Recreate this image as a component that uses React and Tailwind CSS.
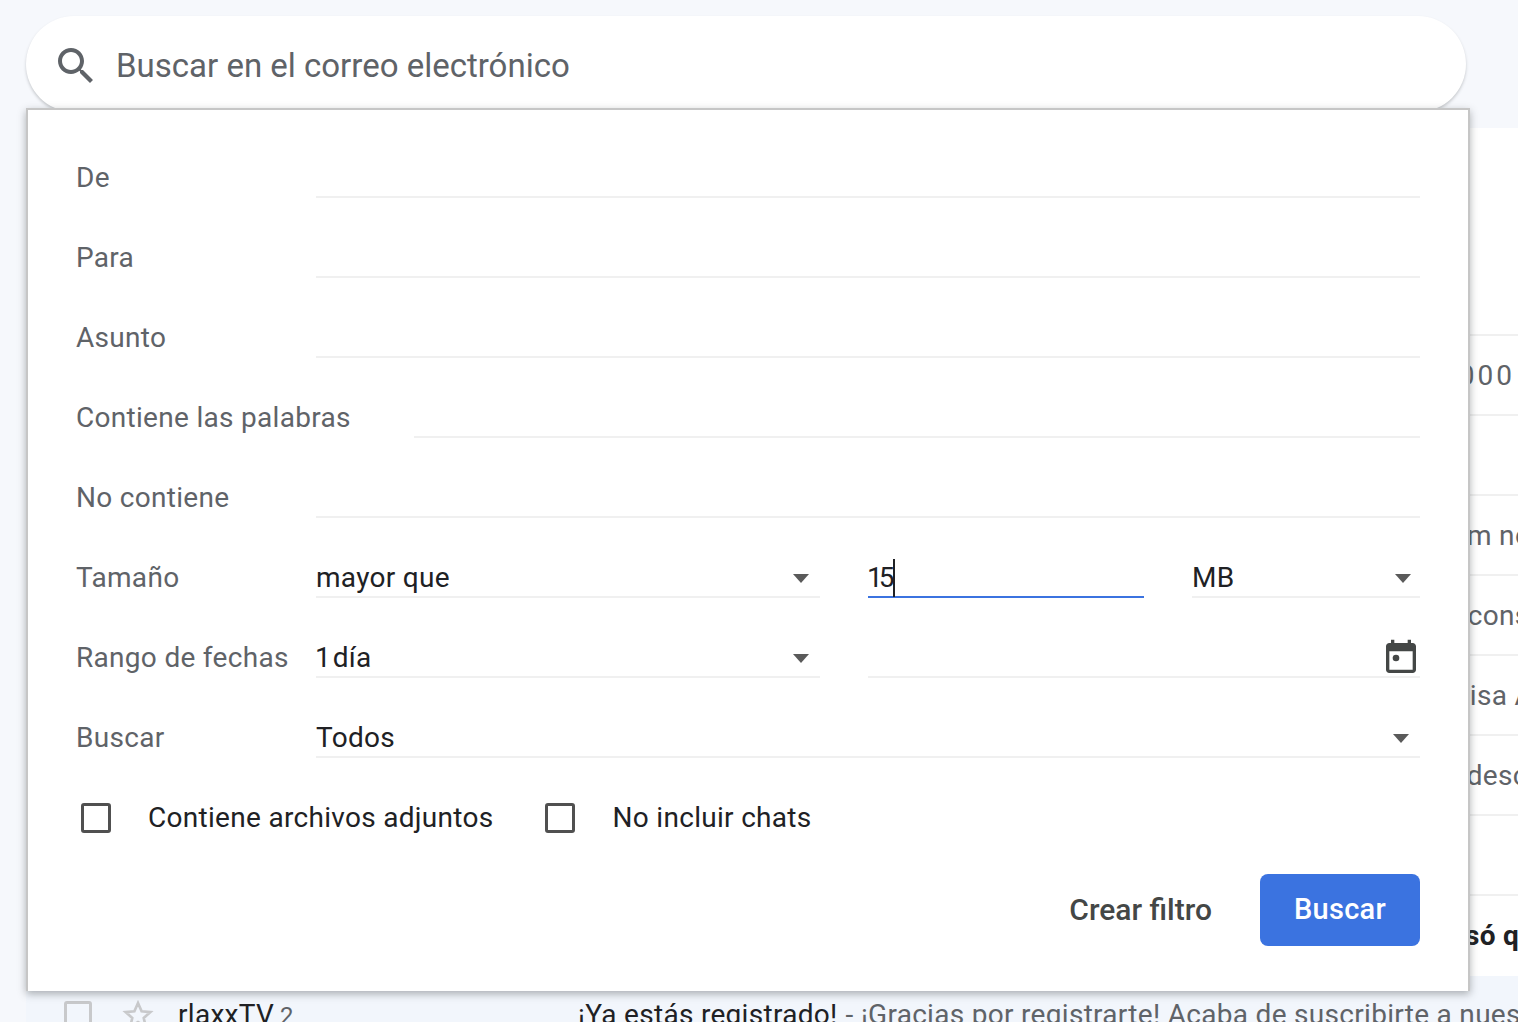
import { Fragment } from "react";

const font = "font-['Roboto','Liberation_Sans',sans-serif]";

// rows of the mail list that stick out to the right of the panel
const mailRows = [
  { text: "5000", cls: "pl-[1414px] tracking-[3px] text-[#5f6368]" },
  { text: "", cls: "" },
  { text: "bm no", cls: "pl-[1425px] text-[#5f6368]" },
  { text: "a cons", cls: "pl-[1419px] text-[#5f6368]" },
  { text: "misa A", cls: "pl-[1419px] text-[#5f6368]" },
  { text: "a desc", cls: "pl-[1418px] text-[#5f6368]" },
  { text: "", cls: "" },
  { text: "só q", cls: "pl-[1439px] font-bold text-[#202124]" },
];

function Caret() {
  return (
    <svg width="16" height="10" viewBox="0 0 16 10" className="shrink-0">
      <path d="M0 1h16L8 10z" fill="#5a5a5a" />
    </svg>
  );
}

function SelectField({ value, className }) {
  return (
    <div className={`flex h-10 items-center justify-between border-b-2 border-[#f0f0f0] pt-[2px] ${className}`}>
      <span className="text-[#202124]">{value}</span>
      <Caret />
    </div>
  );
}

function Row({ label, children }) {
  return (
    <div className="flex h-20 items-end">
      <div className="h-10 w-[240px] shrink-0 leading-[40px] text-[#5f6368]">{label}</div>
      {children}
    </div>
  );
}

function TextRow({ label }) {
  return (
    <Row label={label}>
      <div className="h-10 flex-1 border-b-2 border-[#f0f0f0]" />
    </Row>
  );
}

function Checkbox({ label, className }) {
  return (
    <Fragment>
      <span className={`box-border h-[30px] w-[30px] shrink-0 rounded-[3px] border-[3px] border-[#505050] ${className}`} />
      <span className="text-[#202124]">{label}</span>
    </Fragment>
  );
}

export default function App() {
  return (
    <div className={`relative h-[1022px] w-[1518px] overflow-hidden bg-[#f6f8fc] ${font} text-[28px] tracking-[0.3px]`}>
      {/* search bar */}
      <div className="pt-4 pl-[26px]">
        <div className="flex h-24 w-[1440px] items-center rounded-[48px] bg-white pl-[26px] shadow-[0_2px_3px_rgba(60,64,67,0.25)]">
          <svg width="48" height="48" viewBox="0 0 24 24" fill="#5f6368" className="mt-1 shrink-0">
            <path d="M15.5 14h-.79l-.28-.27C15.41 12.59 16 11.11 16 9.5 16 5.91 13.09 3 9.5 3S3 5.91 3 9.5 5.91 16 9.5 16c1.61 0 3.09-.59 4.23-1.57l.27.28v.79l5 4.99L20.49 19l-4.99-5zm-6 0C7.01 14 5 11.99 5 9.5S7.01 5 9.5 5 14 7.01 14 9.5 11.99 14 9.5 14z" />
          </svg>
          <span className="mt-1 ml-4 text-[33px] tracking-normal text-[#5f6368]">Buscar en el correo electrónico</span>
        </div>
      </div>

      {/* mail list behind the panel */}
      <div className="mt-4 ml-[26px] bg-white">
        <div className="h-[206px]" />
        <div className="pb-0.5">
          {mailRows.map((row, i) => (
            <div key={i} className={`h-20 overflow-hidden border-t-2 border-[#f0f0f0] whitespace-nowrap leading-[80px] ${row.cls}`}>
              {row.text}
            </div>
          ))}
        </div>
        <div className="flex h-[46px] items-start whitespace-nowrap bg-[#f2f6fc] pl-[38px]">
          <span className="mt-[25px] box-border h-7 w-7 shrink-0 rounded-[3px] border-[3px] border-[#c8c9cb]" />
          <svg width="32" height="32" viewBox="0 0 24 24" fill="none" stroke="#c8c9cb" strokeWidth="2" className="mt-[23px] ml-[30px] shrink-0">
            <path d="M12 3l2.7 6.2 6.6.6-5 4.4 1.5 6.6L12 17.3l-5.8 3.5 1.5-6.6-5-4.4 6.6-.6z" />
          </svg>
          <span className="mt-[23px] ml-[24px] w-[102px] shrink-0 leading-[32px] text-[#202124]">rlaxxTV</span>
          <span className="mt-[23px] w-[298px] shrink-0 text-[24px] leading-[34px] text-[#5f6368]">2</span>
          <span className="mt-[23px] leading-[32px] text-[#202124]">¡Ya estás registrado!</span>
          <span className="mt-[23px] ml-2 leading-[32px] text-[#5f6368]">- ¡Gracias por registrarte! Acaba de suscribirte a nuestro boletín</span>
        </div>
      </div>

      {/* advanced search panel */}
      <div className="absolute top-[108px] left-[26px] box-border h-[883px] w-[1444px] border-x-2 border-t-2 border-[#c6c6c6] bg-white pt-2 pr-12 pl-12 shadow-[0_3px_8px_rgba(60,64,67,0.4)]">
        <TextRow label="De" />
        <TextRow label="Para" />
        <TextRow label="Asunto" />
        <div className="flex h-20 items-end">
          <div className="h-10 w-[338px] shrink-0 leading-[40px] text-[#5f6368]">Contiene las palabras</div>
          <div className="h-10 flex-1 border-b-2 border-[#f0f0f0]" />
        </div>
        <TextRow label="No contiene" />
        <Row label="Tamaño">
          <SelectField value="mayor que" className="w-[504px] pr-[11px]" />
          <div className="ml-12 flex h-10 w-[276px] items-center border-b-2 border-[#3b73e0] pt-[2px] tracking-[-4px] text-[#202124]">
            <span className="-ml-px">15</span>
            <span className="ml-[3px] h-[38px] w-[2px] bg-[#202124]" />
          </div>
          <SelectField value="MB" className="ml-12 w-[228px] pr-[9px]" />
        </Row>
        <Row label="Rango de fechas">
          <SelectField
            value={
              <>
                <span className="-ml-px tracking-[-5px]">1 </span>
                <span className="ml-[5px]">día</span>
              </>
            }
            className="w-[504px] pr-[11px]"
          />
          <div className="ml-12 flex h-10 flex-1 items-center justify-end border-b-2 border-[#f0f0f0] pt-[2px]">
            <svg width="40" height="40" viewBox="0 0 24 24" fill="#444746" className="-mr-px shrink-0">
              <path d="M16 1v2H8V1H6v2H5c-1.11 0-1.99.9-1.99 2L3 19c0 1.1.89 2 2 2h14c1.1 0 2-.9 2-2V5c0-1.1-.9-2-2-2h-1V1h-2zm3 18H5V8h14v11z" />
              <circle cx="9" cy="12" r="2" />
            </svg>
          </div>
        </Row>
        <Row label="Buscar">
          <SelectField value="Todos" className="flex-1 pr-[11px]" />
        </Row>
        <div className="mt-[45px] flex h-[30px] items-center">
          <Checkbox label="Contiene archivos adjuntos" className="mr-[37px] ml-[5px]" />
          <span className="w-[51px]" />
          <Checkbox label="No incluir chats" className="mr-[38px]" />
        </div>
        <div className="mt-[41px] flex items-center justify-end">
          <span className="mb-[2px] text-[30px] font-medium tracking-normal text-[#444746]">Crear filtro</span>
          <button className="ml-12 h-[72px] w-40 rounded-lg bg-[#3b73e0] text-[29px] font-medium text-white">Buscar</button>
        </div>
      </div>
    </div>
  );
}
